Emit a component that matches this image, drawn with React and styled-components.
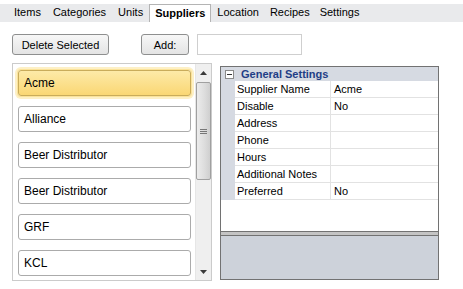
import React from "react";
import styled, { createGlobalStyle } from "styled-components";

const Global = createGlobalStyle`
  html, body { margin: 0; padding: 0; background: #fff; }
  * { box-sizing: border-box; }
`;

const Page = styled.div`
  width: 463px;
  height: 289px;
  background: #fff;
  padding-top: 4px;
  font-family: "Liberation Sans", Arial, sans-serif;
  font-size: 11px;
  color: #000;
  overflow: hidden;
`;

const TabBar = styled.div`
  display: flex;
  align-items: flex-end;
  height: 18px;
  background: #e9eaec;
  padding-left: 8px;
`;

const Tab = styled.div`
  height: 18px;
  line-height: 17px;
  padding: 0 ${(p) => p.$pad}px;
  white-space: nowrap;
  ${(p) =>
    p.$active &&
    `
    background: #fff;
    border: 1px solid #b4b4b4;
    border-bottom: none;
    font-weight: bold;
  `}
`;

const Toolbar = styled.div`
  display: flex;
  height: 21px;
  margin-top: 12px;
  padding-left: 12px;
`;

const Button = styled.button`
  width: ${(p) => p.$w}px;
  margin-left: ${(p) => p.$ml || 0}px;
  height: 21px;
  border: 1px solid #8e8f8f;
  border-radius: 3px;
  background: linear-gradient(#f7f7f7, #e4e4e4);
  font-family: "Liberation Sans", Arial, sans-serif;
  font-size: 11px;
  color: #000;
  padding: 0;
`;

const TextInput = styled.input`
  width: 105px;
  height: 21px;
  margin-left: 8px;
  border: 1px solid #cfcfcf;
  background: #fff;
  font-family: "Liberation Sans", Arial, sans-serif;
  font-size: 11px;
`;

const Main = styled.div`
  display: flex;
  align-items: flex-start;
  margin-top: 8px;
  padding-left: 12px;
`;

const ListPanel = styled.div`
  display: flex;
  width: 200px;
  height: 218px;
  border: 1px solid #cbcbcb;
  background: #fff;
`;

const ItemColumn = styled.div`
  display: flex;
  flex-direction: column;
  gap: 10px;
  width: 181px;
  padding: 6px 0 0 5px;
  overflow: hidden;
`;

const Item = styled.div`
  flex: none;
  width: 173px;
  height: 26px;
  line-height: 24px;
  padding-left: 5px;
  font-size: 12px;
  border: 1px solid #ababab;
  border-radius: 3px;
  background: #fff;
  ${(p) =>
    p.$selected &&
    `
    background: linear-gradient(#fdeaa8, #fad774);
    border-color: #c9ac5b;
    box-shadow: 0 0 0 1px #fbe39a, 0 0 0 3px #fdf0c6;
  `}
`;

const ScrollBar = styled.div`
  display: flex;
  flex-direction: column;
  align-items: center;
  width: 16px;
  margin-left: auto;
  background: #efefef;
  border-left: 1px solid #e6e6e6;
`;

const Arrow = styled.div`
  height: 17px;
  display: flex;
  align-items: center;
  justify-content: center;
  flex: none;
`;

const Thumb = styled.div`
  width: 15px;
  height: 98px;
  margin-top: 1px;
  border: 1px solid #a0a0a0;
  border-radius: 2px;
  background: linear-gradient(90deg, #ececec, #dcdcdc 60%, #cfcfcf);
  display: flex;
  align-items: center;
  justify-content: center;
`;

const Spacer = styled.div`
  flex: 1;
`;

const GridPanel = styled.div`
  display: flex;
  flex-direction: column;
  width: 219px;
  height: 214px;
  margin-left: 8px;
  margin-top: 3px;
  border: 1px solid #727272;
  background: #c4c4c4;
`;

const GridBody = styled.div`
  height: 165px;
  background: #fff;
  border-bottom: 1px solid #727272;
`;

const HeaderRow = styled.div`
  display: flex;
  align-items: center;
  height: 14px;
  background: #d6dae2;
`;

const Toggle = styled.div`
  width: 9px;
  height: 9px;
  margin: 0 7px 0 4px;
  border: 1px solid #8a8a8a;
  background: #fff;
  display: flex;
  align-items: center;
  justify-content: center;
  &::after {
    content: "";
    width: 5px;
    height: 1px;
    background: #333;
  }
`;

const HeaderText = styled.div`
  font-weight: bold;
  color: #1f3e86;
  font-size: 11px;
`;

const Row = styled.div`
  display: flex;
  height: 17px;
`;

const Gutter = styled.div`
  width: 14px;
  background: #d6dae2;
  flex: none;
`;

const Cell = styled.div`
  width: ${(p) => p.$w}px;
  flex: ${(p) => (p.$w ? "none" : 1)};
  border-bottom: 1px solid #e2e2e2;
  border-right: ${(p) => (p.$w ? "1px solid #e2e2e2" : "none")};
  padding-left: ${(p) => (p.$w ? 2 : 3)}px;
  line-height: 16px;
  white-space: nowrap;
  overflow: hidden;
`;

const Splitter = styled.div`
  height: 3px;
  flex: none;
`;

const Description = styled.div`
  flex: 1;
  background: #cdd2da;
  border-top: 1px solid #727272;
`;

const tabs = [
  ["Items", 6],
  ["Categories", 6],
  ["Units", 6],
  ["Suppliers", 5],
  ["Location", 6],
  ["Recipes", 5],
  ["Settings", 5],
];
const suppliers = ["Acme", "Alliance", "Beer Distributor", "Beer Distributor", "GRF", "KCL"];
const props = [
  ["Supplier Name", "Acme"],
  ["Disable", "No"],
  ["Address", ""],
  ["Phone", ""],
  ["Hours", ""],
  ["Additional Notes", ""],
  ["Preferred", "No"],
];

export default function App() {
  return (
    <Page>
      <Global />
      <TabBar>
        {tabs.map(([t, pad]) => (
          <Tab key={t} $pad={pad} $active={t === "Suppliers"}>
            {t}
          </Tab>
        ))}
      </TabBar>
      <Toolbar>
        <Button $w={97}>Delete Selected</Button>
        <Button $w={48} $ml={32}>
          Add:
        </Button>
        <TextInput />
      </Toolbar>
      <Main>
        <ListPanel>
          <ItemColumn>
            {suppliers.map((s, i) => (
              <Item key={i} $selected={i === 0}>
                {s}
              </Item>
            ))}
          </ItemColumn>
          <ScrollBar>
            <Arrow>
              <svg width="7" height="4" viewBox="0 0 7 4">
                <path d="M0 4 L3.5 0 L7 4 Z" fill="#3a3a3a" />
              </svg>
            </Arrow>
            <Thumb>
              <svg width="7" height="7" viewBox="0 0 7 7">
                <path d="M0 1.5h7M0 3.5h7M0 5.5h7" stroke="#777" strokeWidth="1" />
              </svg>
            </Thumb>
            <Spacer />
            <Arrow>
              <svg width="7" height="4" viewBox="0 0 7 4">
                <path d="M0 0 L3.5 4 L7 0 Z" fill="#3a3a3a" />
              </svg>
            </Arrow>
          </ScrollBar>
        </ListPanel>
        <GridPanel>
          <GridBody>
            <HeaderRow>
              <Toggle />
              <HeaderText>General Settings</HeaderText>
            </HeaderRow>
            {props.map(([k, v]) => (
              <Row key={k}>
                <Gutter />
                <Cell $w={96}>{k}</Cell>
                <Cell>{v}</Cell>
              </Row>
            ))}
          </GridBody>
          <Splitter />
          <Description />
        </GridPanel>
      </Main>
    </Page>
  );
}
